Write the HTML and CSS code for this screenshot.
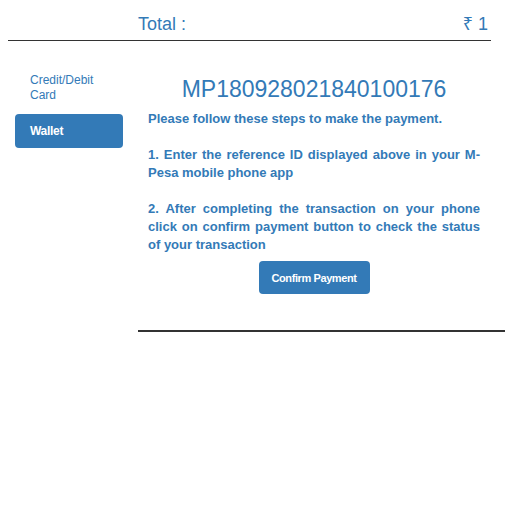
FILE: index.html
```html
<!DOCTYPE html>
<html>
<head>
<meta charset="utf-8">
<link rel="stylesheet" href="styles.css">
</head>
<body>
<div class="total-bar">
  <span class="total-label">Total :</span>
  <span class="total-amount">₹ 1</span>
</div>
<div class="layout">
  <nav class="sidebar">
    <a class="nav-item">Credit/Debit<br>Card</a>
    <a class="nav-item active">Wallet</a>
  </nav>
  <main class="panel">
    <div class="ref-id">MP180928021840100176</div>
    <p class="steps">Please follow these steps to make the payment.<br><br>1. Enter the reference ID displayed above in your M-Pesa mobile phone app<br><br>2. After completing the transaction on your phone click on confirm payment button to check the status of your transaction</p>
    <div class="actions">
      <button class="btn-confirm">Confirm Payment</button>
    </div>
  </main>
</div>
</body>
</html>
```
FILE: styles.css
```css
body {
  margin: 8px;
  font-family: "Liberation Sans", Arial, "Noto Sans", sans-serif;
  color: #337ab7;
  background: #fff;
}
.total-bar {
  display: flex;
  justify-content: space-between;
  width: 483px;
  padding: 6px 3px 6px 130px;
  box-sizing: border-box;
  font-size: 18px;
  line-height: 20px;
  border-bottom: 1px solid #333;
}
.layout {
  display: flex;
  align-items: flex-start;
}
.sidebar {
  width: 130px;
  box-sizing: border-box;
  padding: 23px 15px 0 7px;
  display: flex;
  flex-direction: column;
  gap: 1px;
}
.nav-item {
  display: block;
  padding: 9px 15px 10px;
  font-size: 12px;
  line-height: 15px;
  color: #337ab7;
  border-radius: 4px;
}
.nav-item.active {
  padding: 10px 15px 9px;
  background: #337ab7;
  color: #fff;
  font-weight: bold;
  letter-spacing: -0.3px;
}
.panel {
  width: 367px;
  box-sizing: border-box;
  padding: 35px 25px 36px 10px;
  border-bottom: 2px solid #333;
}
.ref-id {
  text-align: center;
  font-size: 23px;
  line-height: 26px;
}
.steps {
  margin: 8px 0 0;
  font-size: 13px;
  line-height: 18px;
  font-weight: bold;
  text-align: justify;
}
.actions {
  display: flex;
  justify-content: center;
  margin-top: 7px;
}
.btn-confirm {
  width: 111px;
  height: 33px;
  border: none;
  border-radius: 4px;
  background: #337ab7;
  color: #fff;
  font-family: inherit;
  font-size: 11px;
  font-weight: bold;
  letter-spacing: -0.4px;
  padding: 0;
}
```
